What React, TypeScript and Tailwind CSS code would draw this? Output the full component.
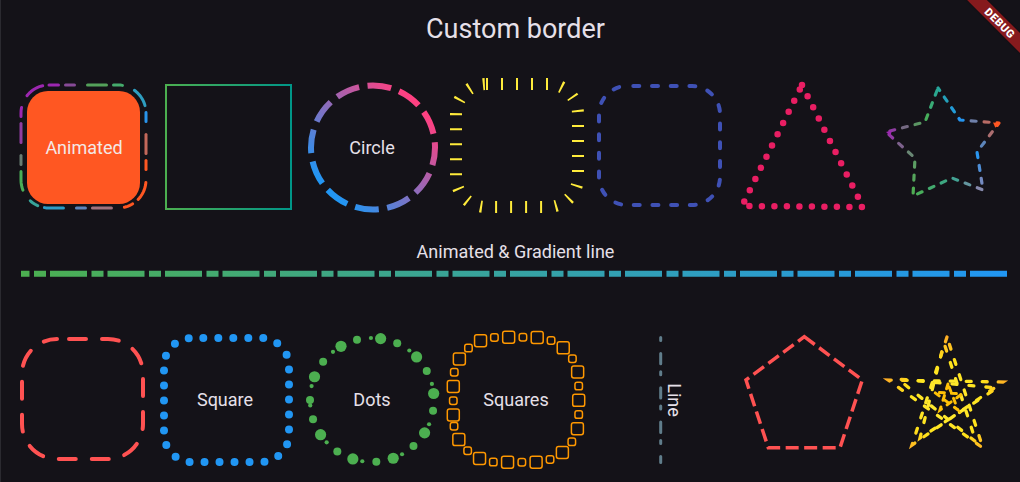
import React from 'react'

type Pt = [number, number]
type Seg = { pts: Pt[]; s0: number; s1: number }

// rounded rect as a polyline, clockwise from the start of the top edge
function rrectPts(x: number, y: number, w: number, h: number, r: number): Pt[] {
  const pts: Pt[] = [[x + r, y]]
  const corners: [number, number, number][] = [
    [x + w - r, y + r, 270],
    [x + w - r, y + h - r, 0],
    [x + r, y + h - r, 90],
    [x + r, y + r, 180],
  ]
  for (const [cx, cy, a0] of corners) {
    for (let i = 0; i <= 18; i++) {
      const a = ((a0 + i * 5) * Math.PI) / 180
      pts.push([cx + r * Math.cos(a), cy + r * Math.sin(a)])
    }
  }
  return pts
}

function dashPath(pts: Pt[], pattern: number[], offset = 0): Seg[] {
  const out: Seg[] = []
  let idx = 0
  let rem = pattern[0]
  let o = offset
  while (o > 0) {
    if (o >= rem) {
      o -= rem
      idx = (idx + 1) % pattern.length
      rem = pattern[idx]
    } else {
      rem -= o
      o = 0
    }
  }
  let dist = 0
  let cur: Seg | null = idx % 2 === 0 ? { pts: [pts[0]], s0: 0, s1: 0 } : null
  for (let i = 0; i < pts.length - 1; i++) {
    let [ax, ay] = pts[i]
    const [bx, by] = pts[i + 1]
    let len = Math.hypot(bx - ax, by - ay)
    while (len > 1e-9) {
      if (rem > len) {
        rem -= len
        dist += len
        len = 0
        if (cur) cur.pts.push([bx, by])
      } else {
        const t = rem / len
        ax += (bx - ax) * t
        ay += (by - ay) * t
        dist += rem
        len -= rem
        if (cur) {
          cur.pts.push([ax, ay])
          cur.s1 = dist
          out.push(cur)
          cur = null
        } else cur = { pts: [[ax, ay]], s0: dist, s1: dist }
        idx = (idx + 1) % pattern.length
        rem = pattern[idx]
      }
    }
  }
  if (cur && cur.pts.length > 1) {
    cur.s1 = dist
    out.push(cur)
  }
  return out
}

function pathLen(pts: Pt[]) {
  let l = 0
  for (let i = 0; i < pts.length - 1; i++) l += Math.hypot(pts[i + 1][0] - pts[i][0], pts[i + 1][1] - pts[i][1])
  return l
}

function pointAt(pts: Pt[], s: number): Pt {
  for (let i = 0; i < pts.length - 1; i++) {
    const [ax, ay] = pts[i]
    const [bx, by] = pts[i + 1]
    const l = Math.hypot(bx - ax, by - ay)
    if (s <= l) {
      const t = l ? s / l : 0
      return [ax + (bx - ax) * t, ay + (by - ay) * t]
    }
    s -= l
  }
  return pts[pts.length - 1]
}

const hex = (c: string) => [1, 3, 5].map(i => parseInt(c.slice(i, i + 2), 16))

function ramp(stops: [number, string][], v: number) {
  if (v <= stops[0][0]) return stops[0][1]
  for (let i = 1; i < stops.length; i++) {
    if (v <= stops[i][0]) {
      const [a, ca] = stops[i - 1]
      const [b, cb] = stops[i]
      const t = (v - a) / (b - a)
      const A = hex(ca)
      const B = hex(cb)
      return `rgb(${A.map((x, j) => Math.round(x + (B[j] - x) * t)).join(',')})`
    }
  }
  return stops[stops.length - 1][1]
}

const ps = (p: Pt[]) => p.map(q => `${q[0].toFixed(2)},${q[1].toFixed(2)}`).join(' ')

function Slot({ children, label, labelClass = '' }: { children?: React.ReactNode; label?: string; labelClass?: string }) {
  return (
    <div className="grid h-[144px] w-[144px] shrink-0 place-items-center">
      <svg width={144} height={144} viewBox="0 0 144 144" className="col-start-1 row-start-1 overflow-visible">
        {children}
      </svg>
      {label && <span className={`col-start-1 row-start-1 text-[18px] leading-6 ${labelClass}`}>{label}</span>}
    </div>
  )
}

/* ---------- top row ---------- */

const ANIM_STOPS: [number, string][] = [
  [-30, '#2196f3'],
  [20, '#ff5722'],
  [60, '#ff5722'],
  [110, '#2196f3'],
  [150, '#4caf50'],
  [210, '#9c27b0'],
  [250, '#9c27b0'],
  [295, '#4caf50'],
  [330, '#2196f3'],
]

function Animated() {
  const segs = dashPath(rrectPts(9, 9, 125, 123, 28), [19, 7, 9, 13], 9.5)
  return (
    <Slot label="Animated" labelClass="text-[#f3e8e6]">
      {segs.map((s, i) => {
        const m = s.pts[Math.floor(s.pts.length / 2)]
        let a = (Math.atan2(m[1] - 70.5, m[0] - 71.5) * 180) / Math.PI
        if (a < 0) a += 360
        if (a >= 330) a -= 360
        return (
          <polyline key={i} points={ps(s.pts)} fill="none" stroke={ramp(ANIM_STOPS, a)} strokeWidth={3} strokeLinecap="round" strokeLinejoin="round" />
        )
      })}
      <rect x={15} y={15} width={113} height={113} rx={21} fill="#ff5722" />
    </Slot>
  )
}

function GreenSquare() {
  return (
    <Slot>
      <defs>
        <linearGradient id="gsq" x1="0" y1="0" x2="1" y2="0">
          <stop offset="0" stopColor="#4caf50" />
          <stop offset="1" stopColor="#009688" />
        </linearGradient>
      </defs>
      <rect x={10} y={9} width={125} height={124} fill="none" stroke="url(#gsq)" strokeWidth={2} />
    </Slot>
  )
}

function GradCircle() {
  return (
    <Slot label="Circle">
      <defs>
        <linearGradient id="gcirc" x1="1" y1="0" x2="0" y2="1">
          <stop offset="0.15" stopColor="#ff4081" />
          <stop offset="0.85" stopColor="#2196f3" />
        </linearGradient>
      </defs>
      <circle cx={73} cy={71.5} r={62} fill="none" stroke="url(#gcirc)" strokeWidth={6} strokeDasharray="24 8.46" strokeDashoffset={6} />
    </Slot>
  )
}

function Ticks() {
  return (
    <Slot>
      <rect x={12} y={8} width={122} height={123} rx={30} fill="none" stroke="#ffeb3b" strokeWidth={12} strokeDasharray="2 13" />
    </Slot>
  )
}

function BlueDashed() {
  return (
    <Slot>
      <rect x={11} y={10} width={121} height={119} rx={28} fill="none" stroke="#3f51b5" strokeWidth={4} strokeDasharray="6 12.7" strokeDashoffset={12.4} strokeLinecap="round" />
    </Slot>
  )
}

function DottedTriangle() {
  return (
    <Slot>
      <polygon points="70,9 131,131 10,130" fill="none" stroke="#e91e63" strokeWidth={6.5} strokeDasharray="0 12.5" strokeLinecap="round" strokeLinejoin="round" />
    </Slot>
  )
}

const STAR: Pt[] = [[62, 12], [84, 44], [123, 47], [101, 76], [107, 114], [76, 102], [37, 120], [39, 82], [10, 56], [49, 46], [62, 12]]
const STAR_COLORS = ['#26a69a', '#2196f3', '#ff5722', '#2196f3', '#8f86b0', '#3aa58f', '#4caf50', '#5f9a68', '#9c27b0', '#4caf50', '#26a69a']

function tip(p: Pt, a: Pt, b: Pt, d: number): string {
  const u = (q: Pt): Pt => {
    const l = Math.hypot(q[0] - p[0], q[1] - p[1])
    return [p[0] + ((q[0] - p[0]) / l) * d, p[1] + ((q[1] - p[1]) / l) * d]
  }
  return ps([p, u(a), u(b)])
}

function GradStar() {
  const stops: [number, string][] = []
  let acc = 0
  STAR.forEach((p, i) => {
    if (i > 0) acc += Math.hypot(p[0] - STAR[i - 1][0], p[1] - STAR[i - 1][1])
    stops.push([acc, STAR_COLORS[i]])
  })
  const segs = dashPath(STAR, [5, 8], 2)
  return (
    <Slot>
      {segs.map((s, i) => (
        <polyline key={i} points={ps(s.pts)} fill="none" stroke={ramp(stops, (s.s0 + s.s1) / 2)} strokeWidth={3.2} strokeLinecap="round" strokeLinejoin="round" />
      ))}
      <polygon points={tip(STAR[8], STAR[7], STAR[9], 6)} fill="#9c27b0" />
      <polygon points={tip(STAR[2], STAR[1], STAR[3], 6)} fill="#ff5722" />
    </Slot>
  )
}

/* ---------- bottom row ---------- */

function RedRounded() {
  return (
    <Slot>
      <rect x={10} y={11} width={121} height={120} rx={35} fill="none" stroke="#ff5252" strokeWidth={4} strokeDasharray="17 16" strokeDashoffset={21} strokeLinecap="round" />
    </Slot>
  )
}

function BlueDots() {
  return (
    <Slot label="Square" labelClass="-translate-x-[3px]">
      <rect x={8} y={10} width={125} height={124} rx={28} fill="none" stroke="#2196f3" strokeWidth={8} strokeDasharray="0 15" strokeDashoffset={3.7} strokeLinecap="round" />
    </Slot>
  )
}

function DotsCircle() {
  const dots: { a: number; r: number }[] = []
  for (let k = 0; k < 10; k++) {
    const b = 164 + 38 * k
    for (const [a, r] of [[b, 5.6], [b + 16, 4], [b + 29, 2.1]]) {
      if (a >= 180 && a < 540) dots.push({ a, r })
    }
  }
  return (
    <Slot label="Dots">
      {dots.map((d, i) => (
        <circle key={i} cx={72 + 62 * Math.cos((d.a * Math.PI) / 180)} cy={72 + 62 * Math.sin((d.a * Math.PI) / 180)} r={d.r} fill="#4caf50" />
      ))}
    </Slot>
  )
}

function SquaresRing() {
  const pts = rrectPts(9.3, 9.3, 125.4, 125, 44)
  const L = pathLen(pts)
  const arc = (Math.PI * 44) / 2
  const start = L - arc - (125 - 88) + 3.3
  const items = Array.from({ length: 30 }, (_, k) => {
    const p = pointAt(pts, (start + (L + 3) / 30 * k) % L)
    return { p, size: k % 2 === 0 ? 12 : 7.5 }
  })
  return (
    <Slot label="Squares">
      {items.map((it, i) => (
        <rect
          key={i}
          x={it.p[0] - it.size / 2}
          y={it.p[1] - it.size / 2}
          width={it.size}
          height={it.size}
          rx={2.2}
          fill="none"
          stroke="#ff9800"
          strokeWidth={1.5}
        />
      ))}
    </Slot>
  )
}

function VLine() {
  return (
    <Slot label="Line" labelClass="translate-x-[14px] rotate-90">
      <line x1={72.7} y1={9.5} x2={72.7} y2={134.5} stroke="#607d8b" strokeWidth={3} strokeDasharray="10.3 8 3 13" strokeDashoffset={18.3} strokeLinecap="round" />
    </Slot>
  )
}

function Pentagon() {
  return (
    <Slot>
      <polygon points="72.3,8.7 130.3,52 108,119.7 36.3,119.7 14,52" fill="none" stroke="#ff5252" strokeWidth={3.5} strokeDasharray="13 5.5" strokeLinejoin="miter" />
    </Slot>
  )
}

function pentagram(top: Pt, r: Pt, l: Pt, bl: Pt, br: Pt) {
  return ps([top, bl, r, l, br, top])
}

function ScribbleStar() {
  return (
    <Slot>
      <defs>
        <radialGradient id="ystar" cx={70} cy={72} r={66} gradientUnits="userSpaceOnUse">
          <stop offset="0" stopColor="#ffeb3b" />
          <stop offset="0.6" stopColor="#ffe31a" />
          <stop offset="1" stopColor="#ffa726" />
        </radialGradient>
      </defs>
      <polyline
        points={pentagram([71, 9], [127, 54], [12, 52], [36, 117], [107, 120])}
        fill="none"
        stroke="url(#ystar)"
        strokeWidth={3.3}
        strokeDasharray="5 11"
        strokeLinecap="round"
      />
      <polyline
        points={pentagram([68, 15], [121, 60], [22, 51], [44, 110], [100, 114])}
        fill="none"
        stroke="url(#ystar)"
        strokeWidth={3.3}
        strokeDasharray="5 12"
        strokeDashoffset={8}
        strokeLinecap="round"
      />
      <polyline
        points={pentagram([72, 56], [86, 66], [58, 64], [64, 82], [82, 82])}
        fill="none"
        stroke="#ffc107"
        strokeWidth={3}
        strokeDasharray="5 7"
        strokeLinecap="round"
      />
    </Slot>
  )
}

export default function App() {
  return (
    <div className="relative flex h-[482px] w-[1020px] flex-col overflow-hidden border-l border-[#2b2a30] bg-[#141218] font-['Roboto',sans-serif] text-[#e6e0e9]">
      <h1 className="pl-[10px] pt-[11px] text-center text-[27px] leading-[36px]">Custom border</h1>

      <div className="mt-[29px] flex pl-[11px]">
        <Animated />
        <GreenSquare />
        <GradCircle />
        <Ticks />
        <BlueDashed />
        <DottedTriangle />
        <GradStar />
      </div>

      <p className="mt-[20px] pl-[10px] text-center text-[18px] leading-6">Animated &amp; Gradient line</p>
      <svg width={986} height={10} className="ml-[20px] mt-[4px]">
        <defs>
          <linearGradient id="gline" x1={0} y1={0} x2={986} y2={0} gradientUnits="userSpaceOnUse">
            <stop offset="0" stopColor="#4caf50" />
            <stop offset="1" stopColor="#2196f3" />
          </linearGradient>
        </defs>
        <line x1={0} y1={5.7} x2={986} y2={5.7} stroke="url(#gline)" strokeWidth={6} strokeDasharray="37 4.5 12 4" strokeDashoffset={28.5} />
      </svg>

      <div className="mt-[50px] flex pl-[11px]">
        <RedRounded />
        <BlueDots />
        <DotsCircle />
        <SquaresRing />
        <VLine />
        <Pentagon />
        <ScribbleStar />
      </div>

      {/* debug banner */}
      <div className="absolute right-[-30px] top-[16px] flex h-[14px] w-[100px] rotate-45 items-center justify-center bg-[#861a1d] text-[11px] font-black leading-none tracking-[0.5px] text-white shadow-[0_0_2px_rgba(0,0,0,0.5)]">
        DEBUG
      </div>
    </div>
  )
}
